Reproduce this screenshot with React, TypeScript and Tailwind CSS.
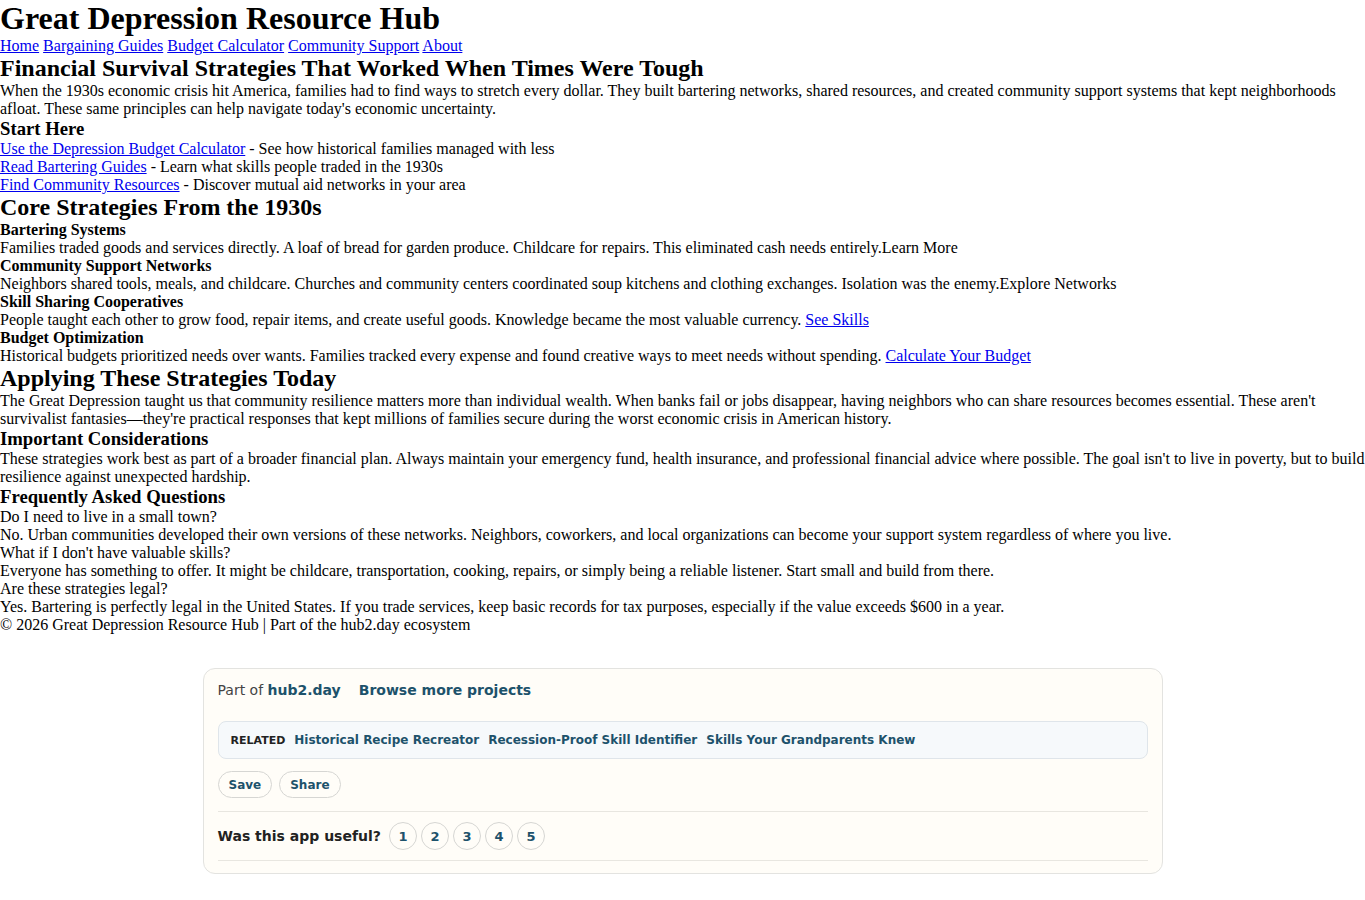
import React from "react";

const link = "text-[#0000ee] underline";

const faqs = [
  {
    q: "Do I need to live in a small town?",
    a: "No. Urban communities developed their own versions of these networks. Neighbors, coworkers, and local organizations can become your support system regardless of where you live.",
  },
  {
    q: "What if I don't have valuable skills?",
    a: "Everyone has something to offer. It might be childcare, transportation, cooking, repairs, or simply being a reliable listener. Start small and build from there.",
  },
  {
    q: "Are these strategies legal?",
    a: "Yes. Bartering is perfectly legal in the United States. If you trade services, keep basic records for tax purposes, especially if the value exceeds $600 in a year.",
  },
];

const related = ["Historical Recipe Recreator", "Recession-Proof Skill Identifier", "Skills Your Grandparents Knew"];

const App = () => {
  return (
    <div className="min-h-screen bg-white text-black font-['Liberation_Serif',serif] text-[16px] leading-[normal] pb-[27px]">
      <header>
        <h1 className="text-[32px] font-bold leading-[normal]">Great Depression Resource Hub</h1>
        <nav>
          <a className={link} href="#">Home</a>{" "}
          <a className={link} href="#">Bargaining Guides</a>{" "}
          <a className={link} href="#">Budget Calculator</a>{" "}
          <a className={link} href="#">Community Support</a>{" "}
          <a className={link} href="#">About</a>
        </nav>
      </header>

      <main>
        <section>
          <h2 className="text-[24px] font-bold leading-[normal]">Financial Survival Strategies That Worked When Times Were Tough</h2>
          <p>
            When the 1930s economic crisis hit America, families had to find ways to stretch every dollar. They built bartering networks, shared resources, and created community support systems that kept neighborhoods afloat. These same principles can help navigate today's economic uncertainty.
          </p>
          <h3 className="text-[18.72px] font-bold leading-[normal]">Start Here</h3>
          <ul>
            <li><a className={link} href="#">Use the Depression Budget Calculator</a> - See how historical families managed with less</li>
            <li><a className={link} href="#">Read Bartering Guides</a> - Learn what skills people traded in the 1930s</li>
            <li><a className={link} href="#">Find Community Resources</a> - Discover mutual aid networks in your area</li>
          </ul>
        </section>

        <section>
          <h2 className="text-[24px] font-bold leading-[normal]">Core Strategies From the 1930s</h2>
          <h4 className="font-bold">Bartering Systems</h4>
          <p>Families traded goods and services directly. A loaf of bread for garden produce. Childcare for repairs. This eliminated cash needs entirely.<span>Learn More</span></p>
          <h4 className="font-bold">Community Support Networks</h4>
          <p>Neighbors shared tools, meals, and childcare. Churches and community centers coordinated soup kitchens and clothing exchanges. Isolation was the enemy.<span>Explore Networks</span></p>
          <h4 className="font-bold">Skill Sharing Cooperatives</h4>
          <p>People taught each other to grow food, repair items, and create useful goods. Knowledge became the most valuable currency. <a className={link} href="#">See Skills</a></p>
          <h4 className="font-bold">Budget Optimization</h4>
          <p>Historical budgets prioritized needs over wants. Families tracked every expense and found creative ways to meet needs without spending. <a className={link} href="#">Calculate Your Budget</a></p>
        </section>

        <section>
          <h2 className="text-[24px] font-bold leading-[normal]">Applying These Strategies Today</h2>
          <p>
            The Great Depression taught us that community resilience matters more than individual wealth. When banks fail or jobs disappear, having neighbors who can share resources becomes essential. These aren't survivalist fantasies—they're practical responses that kept millions of families secure during the worst economic crisis in American history.
          </p>
          <h3 className="text-[18.72px] font-bold leading-[normal]">Important Considerations</h3>
          <p>
            These strategies work best as part of a broader financial plan. Always maintain your emergency fund, health insurance, and professional financial advice where possible. The goal isn't to live in poverty, but to build resilience against unexpected hardship.
          </p>
        </section>

        <section>
          <h3 className="text-[18.72px] font-bold leading-[normal]">Frequently Asked Questions</h3>
          {faqs.map((f, i) => (
            <div key={i}>
              <p>{f.q}</p>
              <p>{f.a}</p>
            </div>
          ))}
        </section>
      </main>

      <footer>
        <p>© 2026 Great Depression Resource Hub | Part of the hub2.day ecosystem</p>
      </footer>

      {/* hub2 promo card */}
      <div className="mx-auto mt-[34px] w-[960px] rounded-xl border border-[#e3e3e0] bg-[#fffdf8] px-[14px] pt-[13px] pb-3 font-['DejaVu_Sans',sans-serif] leading-[normal]">
        <div className="flex items-center gap-[18px] text-[14px]">
          <span className="text-[#444]">
            Part of <a href="#" className="font-bold text-[#1d526b]">hub2.day</a>
          </span>
          <a href="#" className="font-bold text-[#1d526b]">Browse more projects</a>
        </div>

        <div className="mt-[23px] flex items-center gap-[9px] rounded-lg border border-[#dfe5ea] bg-[#f6f9fb] px-3 py-[11px] text-[12px]">
          <span className="text-[11px] font-bold text-[#222]">RELATED</span>
          {related.map((r) => (
            <a key={r} href="#" className="font-bold text-[#1d526b]">{r}</a>
          ))}
        </div>

        <div className="mt-[12px] flex gap-[7px]">
          {["Save", "Share"].map((b) => (
            <button key={b} className="flex h-[27px] items-center rounded-full border border-[#d6d6d3] bg-transparent px-[10px] text-[12px] font-bold text-[#1d526b]">
              {b}
            </button>
          ))}
        </div>

        <div className="mt-[13px] flex items-center gap-2 border-y border-[#e8e6e0] py-[10px]">
          <span className="text-[14px] font-bold text-[#222]">Was this app useful?</span>
          <div className="flex gap-1">
            {[1, 2, 3, 4, 5].map((n) => (
              <button key={n} className="flex h-7 w-7 items-center justify-center rounded-full border border-[#d6d6d3] text-[13px] font-bold text-[#1d526b]">
                {n}
              </button>
            ))}
          </div>
        </div>
      </div>
    </div>
  );
};

export default App;
